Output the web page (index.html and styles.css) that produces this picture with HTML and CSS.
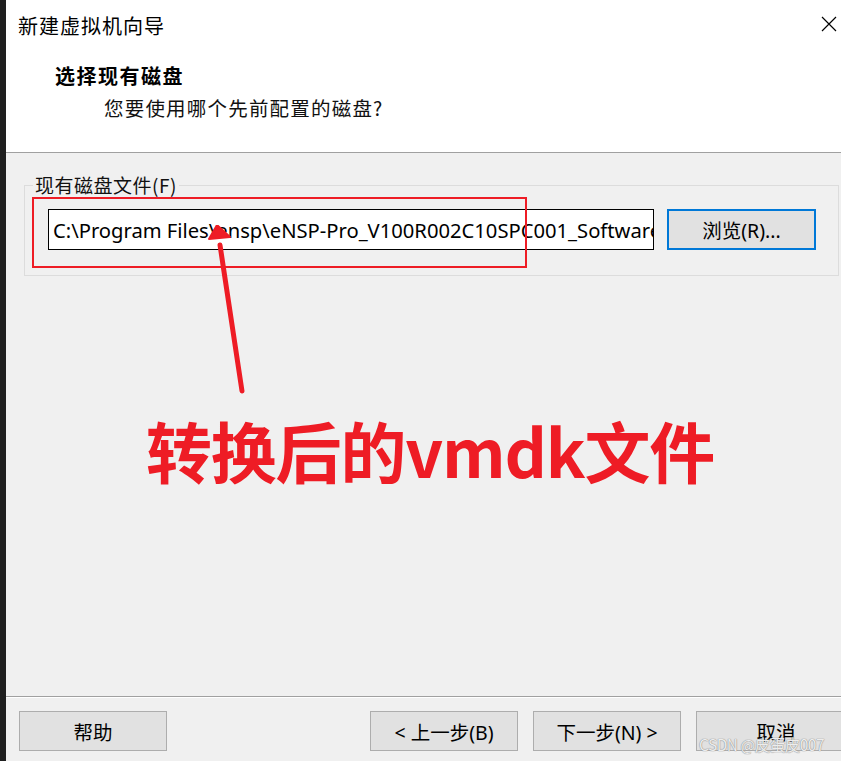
FILE: index.html
```html
<!DOCTYPE html>
<html lang="zh">
<head>
<meta charset="utf-8">
<title>新建虚拟机向导</title>
<link rel="stylesheet" href="styles.css">
</head>
<body>
<div class="window">
  <div class="strip"></div>
  <div class="dialog">
    <header class="head">
      <div class="titlebar">
        <span class="title">新建虚拟机向导</span>
        <svg class="close" width="16" height="16" viewBox="0 0 16 16"><path d="M1 1L15 15M15 1L1 15" stroke="#000" stroke-width="1.2" fill="none"/></svg>
      </div>
      <div class="step-title">选择现有磁盘</div>
      <div class="step-sub">您要使用哪个先前配置的磁盘?</div>
    </header>
    <main class="body">
      <fieldset class="group">
        <legend class="legend">现有磁盘文件(F)</legend>
        <div class="row">
          <div class="input"><span>C:\Program Files\ensp\eNSP-Pro_V100R002C10SPC001_Software\vmdk</span></div>
          <button class="btn btn-focus">浏览(R)...</button>
        </div>
      </fieldset>
      <div class="redbox"></div>
      <svg class="arrow" width="60" height="170" viewBox="0 0 60 170">
        <line x1="44" y1="166" x2="22" y2="20" stroke="#ee1c25" stroke-width="5" stroke-linecap="round"/>
        <polygon points="19,0 11,14 32,12" fill="#ee1c25" stroke="#ee1c25" stroke-width="2" stroke-linejoin="round"/>
      </svg>
      <div class="note">转换后的vmdk文件</div>
    </main>
    <footer class="foot">
      <button class="btn">帮助</button>
      <div class="spacer"></div>
      <button class="btn">&lt; 上一步(B)</button>
      <button class="btn">下一步(N) &gt;</button>
      <button class="btn btn-cut">取消</button>
      <span class="mark">CSDN @皮蛋皮007</span>
    </footer>
  </div>
</div>
</body>
</html>
```

FILE: styles.css
```css
* { box-sizing: border-box; }
html, body { margin: 0; padding: 0; }
body {
  width: 841px;
  height: 761px;
  overflow: hidden;
  background: #f0f0f0;
  font-family: "Noto Sans", "Noto Sans CJK SC", sans-serif;
  color: #000;
}
.window {
  display: flex;
  height: 761px;
}
.strip {
  width: 6px;
  flex: none;
  background: #1f1f1f;
}
.dialog {
  flex: 1;
  display: flex;
  flex-direction: column;
  position: relative;
  overflow: hidden;
}
.head {
  background: #fff;
  height: 153px;
  border-bottom: 1px solid #a0a0a0;
  flex: none;
}
.titlebar {
  display: flex;
  align-items: center;
  justify-content: space-between;
  padding: 11px 4px 0 12px;
  height: 40px;
}
.title {
  font-family: "Noto Sans CJK SC", sans-serif;
  font-size: 20px;
  line-height: 28px;
  letter-spacing: 1px;
}
.close { margin-top: -4px; }
.step-title {
  margin: 23px 0 0 49px;
  font-family: "Noto Sans CJK SC", sans-serif;
  font-size: 20px;
  font-weight: 700;
  letter-spacing: 1.5px;
  line-height: 26px;
}
.step-sub {
  margin: 6px 0 0 98px;
  font-family: "Noto Sans CJK SC", sans-serif;
  font-size: 19.5px;
  letter-spacing: 1.2px;
  line-height: 26px;
  color: #111;
}
.body {
  flex: 1;
  position: relative;
  padding: 21px 2px 0 18px;
}
.group {
  margin: 0;
  height: 102px;
  border: 1px solid #dcdcdc;
  padding: 0 0 0 23px;
  position: relative;
}
.legend {
  padding: 0 2px 0 2px;
  margin-left: -15px;
  font-family: "Noto Sans CJK SC", sans-serif;
  font-size: 19px;
  line-height: 22px;
  letter-spacing: 0.5px;
  color: #111;
}
.row {
  display: flex;
  gap: 13px;
  margin-top: 13px;
}
.input {
  width: 606px;
  height: 41px;
  border: 1px solid #000;
  background: #fff;
  overflow: hidden;
  white-space: nowrap;
  padding: 0 0 0 4px;
  display: flex;
  align-items: center;
  font-size: 20.2px;
}
.btn {
  width: 148px;
  height: 40px;
  border: 1px solid #adadad;
  background: #e1e1e1;
  font-family: "Noto Sans", "Noto Sans CJK SC", sans-serif;
  font-size: 19.5px;
  color: #000;
  padding: 0;
  flex: none;
}
.btn-focus {
  width: 149px;
  height: 41px;
  border: 2px solid #0078d7;
}
.redbox {
  position: absolute;
  left: 26px;
  top: 44px;
  width: 495px;
  height: 71px;
  border: 2px solid #ee1c25;
}
.arrow {
  position: absolute;
  left: 192px;
  top: 72px;
}
.note {
  position: absolute;
  left: 140px;
  top: 256px;
  font-family: "Noto Sans CJK SC", sans-serif;
  font-weight: 700;
  font-size: 66px;
  line-height: 80px;
  color: #ee1c25;
  letter-spacing: -1.2px;
  white-space: nowrap;
}
.foot {
  flex: none;
  height: 65px;
  border-top: 1px solid #a0a0a0;
  box-shadow: inset 0 1px 0 #fff;
  display: flex;
  align-items: flex-start;
  gap: 15px;
  padding: 14px 0 0 13px;
  position: relative;
}
.spacer { width: 173px; flex: none; }
.btn-cut { width: 160px; }
.mark {
  position: absolute;
  left: 693px;
  top: 38px;
  font-family: "Noto Sans CJK SC", sans-serif;
  font-size: 15.5px;
  line-height: 18px;
  color: rgba(255,255,255,0.85);
  text-shadow: 0 0 1px #8a8a8a, 0 0 1px #8a8a8a;
  letter-spacing: -0.5px;
}
```
